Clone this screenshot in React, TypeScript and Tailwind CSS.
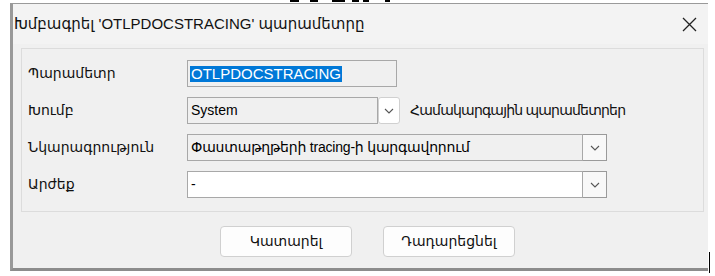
import React from "react";

const font = "font-['Liberation_Sans','DejaVu_Sans',sans-serif]";

function Chevron() {
  return (
    <svg width="10" height="6" viewBox="0 0 10 6" fill="none">
      <path d="M1 1l4 4 4-4" stroke="#555" strokeWidth="1.1" />
    </svg>
  );
}

function Label({ children }: { children: React.ReactNode }) {
  return <div className="flex h-[27px] items-center text-[14px] text-[#111]">{children}</div>;
}

export default function App() {
  return (
    <div className={`h-[276px] w-[715px] overflow-hidden bg-white ${font}`}>
      {/* cut-off text from the line above */}
      <div className="flex h-[3px] items-start">
        <div className="ml-[290px] h-[2px] w-[9px] bg-black" />
        <div className="ml-[11px] h-[2px] w-[8px] bg-black" />
        <div className="ml-[14px] h-[2px] w-[13px] bg-black" />
        <div className="ml-[7px] h-[2px] w-[7px] bg-black" />
        <div className="ml-[4px] h-[2px] w-[6px] bg-black" />
        <div className="ml-[16px] h-[2px] w-[5px] bg-black" />
      </div>

      <div className="flex">
        <div className="ml-[10px] flex h-[268px] w-[698px] flex-col border-t border-b-[3px] border-l-[3px] border-t-[#9a9a9a] border-b-[#8c8c8c] border-l-[#999] bg-[#f0f0f0]">
          {/* title bar */}
          <div className="flex h-[40px] items-center justify-between bg-[#f3f3f3] pl-[1px] pr-[11px]">
            <span className="text-[15px] text-[#111]">Խմբագրել 'OTLPDOCSTRACING' պարամետրը</span>
            <svg width="15" height="15" viewBox="0 0 15 15">
              <path d="M1 1l13 13M14 1L1 14" stroke="#222" strokeWidth="1.3" />
            </svg>
          </div>

          {/* group box */}
          <div className="mt-[4px] ml-[8px] mr-[4px] h-[164px] border border-[#dcdcdc] pt-[11px] pl-[6px]">
            <div className="grid grid-cols-[159px_1fr] gap-y-[10px]">
              <Label>Պարամետր</Label>
              <div className="flex h-[27px] w-[210px] items-center border border-[#a8a8a8] bg-[#f0f0f0] pl-[2px]">
                <span className="bg-[#0078d7] px-[1px] text-[15px] leading-[16px] text-white">OTLPDOCSTRACING</span>
              </div>

              <Label>Խումբ</Label>
              <div className="flex h-[27px] items-center">
                <div className="flex h-[27px] w-[191px] items-center border border-[#a8a8a8] bg-[#f0f0f0] pl-[3px] text-[14px]">
                  System
                </div>
                <div className="flex h-[27px] w-[22px] items-center justify-center rounded-[3px] border border-[#d0d0d0] bg-white">
                  <Chevron />
                </div>
                <span className="ml-[10px] text-[14px] tracking-[-0.8px] text-[#111]">Համակարգային պարամետրեր</span>
              </div>

              <Label>Նկարագրություն</Label>
              <div className="flex h-[27px] items-center">
                <div className="flex h-[27px] w-[396px] items-center border border-[#a8a8a8] bg-[#f0f0f0] pl-[3px] text-[14px] tracking-[-0.2px]">
                  Փաստաթղթերի tracing-ի կարգավորում
                </div>
                <div className="flex h-[27px] w-[24px] items-center justify-center border border-l-0 border-[#9a9a9a] bg-[#f8f8f8]">
                  <Chevron />
                </div>
              </div>

              <Label>Արժեք</Label>
              <div className="flex h-[27px] items-center">
                <div className="flex h-[27px] w-[396px] items-center border border-[#a8a8a8] bg-white pl-[3px] text-[14px]">
                  -
                </div>
                <div className="flex h-[27px] w-[24px] items-center justify-center border border-l-0 border-[#9a9a9a] bg-[#f8f8f8]">
                  <Chevron />
                </div>
              </div>
            </div>
          </div>

          {/* buttons */}
          <div className="mt-[14px] ml-[207px] flex gap-[31px]">
            <button className="h-[31px] w-[132px] rounded-[4px] border border-[#d0d0d0] bg-[#fdfdfd] text-[14px] text-[#111]">
              Կատարել
            </button>
            <button className="h-[31px] w-[132px] rounded-[4px] border border-[#d0d0d0] bg-[#fdfdfd] text-[14px] text-[#111]">
              Դադարեցնել
            </button>
          </div>
        </div>
        {/* cursor line at the right edge */}
        <div className="ml-[1px] mt-[249px] h-[21px] w-[1px] bg-black" />
      </div>
    </div>
  );
}
